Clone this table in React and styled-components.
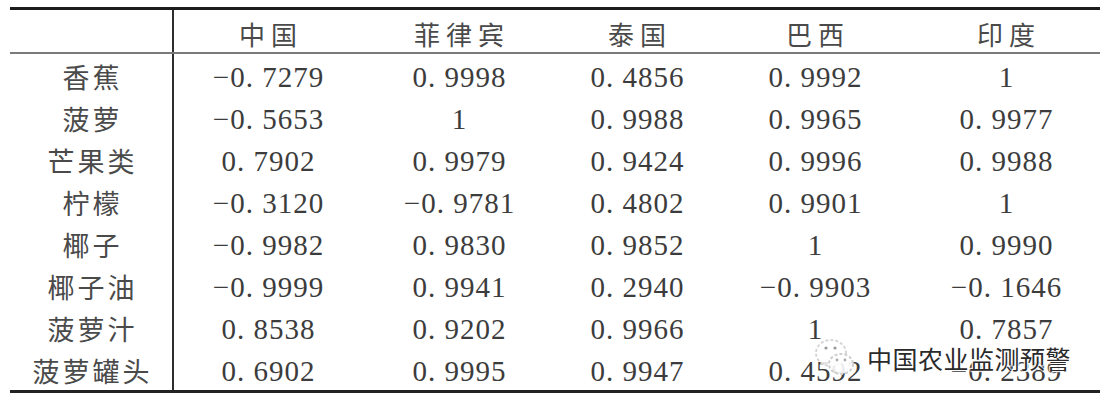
import React from "react";
import styled, { createGlobalStyle } from "styled-components";

const GlobalStyle = createGlobalStyle`
  html, body {
    margin: 0;
    padding: 0;
    background: #ffffff;
  }
  body {
    font-family: "Liberation Serif", "Noto Sans CJK SC", serif;
  }
`;

const columns = ["中国", "菲律宾", "泰国", "巴西", "印度"];

const rows = [
  { name: "香蕉", values: ["−0. 7279", "0. 9998", "0. 4856", "0. 9992", "1"] },
  { name: "菠萝", values: ["−0. 5653", "1", "0. 9988", "0. 9965", "0. 9977"] },
  { name: "芒果类", values: ["0. 7902", "0. 9979", "0. 9424", "0. 9996", "0. 9988"] },
  { name: "柠檬", values: ["−0. 3120", "−0. 9781", "0. 4802", "0. 9901", "1"] },
  { name: "椰子", values: ["−0. 9982", "0. 9830", "0. 9852", "1", "0. 9990"] },
  { name: "椰子油", values: ["−0. 9999", "0. 9941", "0. 2940", "−0. 9903", "−0. 1646"] },
  { name: "菠萝汁", values: ["0. 8538", "0. 9202", "0. 9966", "1", "0. 7857"] },
  { name: "菠萝罐头", values: ["0. 6902", "0. 9995", "0. 9947", "0. 4592", "−0. 2389"] },
];

function WeChatMark() {
  return (
    <svg width="44" height="44" viewBox="0 0 44 44">
      <ellipse cx="18" cy="17" rx="15" ry="13" fill="rgba(255,255,255,0.85)" stroke="#d6d6d6" strokeWidth="2" strokeDasharray="3 2" />
      <ellipse cx="28" cy="28" rx="12" ry="10" fill="rgba(255,255,255,0.9)" stroke="#cfcfcf" strokeWidth="2" strokeDasharray="3 2" />
      <circle cx="13" cy="12" r="1.6" fill="#9a9a9a" />
      <circle cx="22" cy="12" r="1.6" fill="#9a9a9a" />
      <circle cx="24" cy="24" r="1.4" fill="#aaaaaa" />
      <circle cx="32" cy="24" r="1.4" fill="#aaaaaa" />
    </svg>
  );
}

export default function App() {
  return (
    <>
      <GlobalStyle />
      <Page>
        <Table>
          <HeaderRow>
            <LabelCell />
            {columns.map((c) => (
              <HeadCell key={c}>{c}</HeadCell>
            ))}
          </HeaderRow>
          {rows.map((r) => (
            <Row key={r.name}>
              <LabelCell>{r.name}</LabelCell>
              {r.values.map((v, i) => (
                <Cell key={i}>{v}</Cell>
              ))}
            </Row>
          ))}
        </Table>
        <Watermark>
          <WeChatMark />
          <WatermarkText>中国农业监测预警</WatermarkText>
        </Watermark>
      </Page>
    </>
  );
}

const Page = styled.div`
  position: relative;
  width: 1108px;
  height: 408px;
  padding: 7px 0 0 10px;
  box-sizing: border-box;
`;

const Table = styled.div`
  width: 1090px;
  border-top: 3px solid #1c1c1c;
  border-bottom: 3px solid #222222;
`;

const Row = styled.div`
  display: grid;
  grid-template-columns: 164px 188px 194px 162px 194px 188px;
  height: 42px;
`;

const HeaderRow = styled(Row)`
  height: 44px;
  border-bottom: 2px solid #7a7a7a;
  box-sizing: border-box;
`;

const LabelCell = styled.div`
  display: flex;
  align-items: center;
  justify-content: center;
  box-sizing: border-box;
  border-right: 2px solid #2e2e2e;
  padding: 3px 0 0 3px;
  font-family: "Noto Sans CJK SC", sans-serif;
  font-size: 27px;
  letter-spacing: 3px;
  color: #4a4a4a;
`;

const HeadCell = styled.div`
  display: flex;
  align-items: center;
  justify-content: center;
  padding: 4px 0 0 6px;
  font-family: "Noto Sans CJK SC", sans-serif;
  font-size: 26px;
  letter-spacing: 6px;
  color: #4a4a4a;
`;

const Cell = styled.div`
  display: flex;
  align-items: center;
  justify-content: center;
  padding: 5px 0 0 1px;
  font-family: "Liberation Serif", serif;
  font-size: 29px;
  letter-spacing: 1px;
  color: #3c3c3c;
  white-space: pre;
`;

const Watermark = styled.div`
  position: absolute;
  left: 813px;
  top: 336px;
  display: flex;
  align-items: center;
  gap: 10px;
`;

const WatermarkText = styled.span`
  font-family: "Noto Sans CJK SC", sans-serif;
  font-size: 25px;
  letter-spacing: 0.5px;
  color: #2a2a2a;
  text-shadow: 0 0 2px #fff, 0 0 2px #fff, 1px 1px 1px #fff, -1px -1px 1px #fff;
`;
